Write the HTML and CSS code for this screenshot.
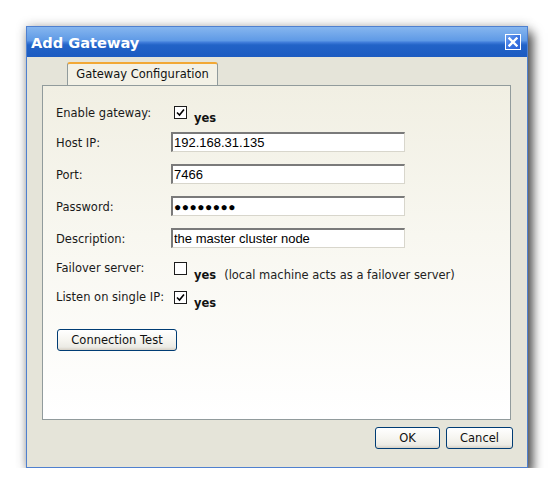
FILE: index.html
```html
<!DOCTYPE html>
<html>
<head>
<meta charset="utf-8">
<link rel="stylesheet" href="styles.css">
</head>
<body>
<div class="window">
  <div class="titlebar">
    <span class="title">Add Gateway</span>
    <span class="close"><svg width="10" height="10" viewBox="0 0 10 10"><path d="M1.5 1.5 L8.5 8.5 M8.5 1.5 L1.5 8.5" stroke="#fff" stroke-width="2.4" stroke-linecap="square"/></svg></span>
  </div>
  <div class="body">
    <div class="tabs"><div class="tab">Gateway Configuration</div></div>
    <div class="panel">
      <div class="row row-enable">
        <span class="label">Enable gateway:</span>
        <span class="cb checked"><svg width="9" height="9" viewBox="0 0 9 9"><path d="M1 4.5 L3.5 7 L8 1.5" fill="none" stroke="#000" stroke-width="1.6"/></svg></span>
        <span class="yes">yes</span>
      </div>
      <div class="row row-input">
        <span class="label">Host IP:</span>
        <input class="field" type="text" value="192.168.31.135">
      </div>
      <div class="row row-input">
        <span class="label">Port:</span>
        <input class="field" type="text" value="7466">
      </div>
      <div class="row row-input">
        <span class="label">Password:</span>
        <input class="field pw" type="text" value="●●●●●●●●">
      </div>
      <div class="row row-input">
        <span class="label">Description:</span>
        <input class="field" type="text" value="the master cluster node">
      </div>
      <div class="row row-failover">
        <span class="label">Failover server:</span>
        <span class="cb"></span>
        <span class="yes">yes</span>
        <span class="note">(local machine acts as a failover server)</span>
      </div>
      <div class="row row-listen">
        <span class="label">Listen on single IP:</span>
        <span class="cb checked"><svg width="9" height="9" viewBox="0 0 9 9"><path d="M1 4.5 L3.5 7 L8 1.5" fill="none" stroke="#000" stroke-width="1.6"/></svg></span>
        <span class="yes">yes</span>
      </div>
      <button class="btn btn-test">Connection Test</button>
    </div>
    <div class="footer">
      <button class="btn btn-ok">OK</button>
      <button class="btn btn-cancel">Cancel</button>
    </div>
  </div>
</div>
</body>
</html>
```
FILE: styles.css
```css
html, body {
  margin: 0;
  padding: 0;
  background: #ffffff;
}
body {
  padding: 26px 0 0 26px;
  font-family: "DejaVu Sans", Verdana, sans-serif;
  font-size: 11.5px;
  color: #222;
}
.window {
  width: 500px;
  height: 440px;
  border: 1px solid #4f80cf;
  background: #e5e4d9;
  box-shadow: 5px 7px 10px rgba(0, 0, 0, 0.65), 0 0 10px rgba(0, 0, 0, 0.25);
  display: flex;
  flex-direction: column;
}
.titlebar {
  height: 30px;
  background: linear-gradient(to bottom, #86b6ef 0%, #5f9ae6 45%, #3d7ad9 52%, #2263c7 60%, #1c5bc1 100%);
  display: flex;
  align-items: center;
  justify-content: space-between;
  padding: 0 6px 0 4px;
}
.title {
  font-family: "DejaVu Sans", Verdana, sans-serif;
  font-weight: bold;
  font-size: 14.6px;
  color: #fff;
  margin-top: 1px;
}
.close {
  width: 14px;
  height: 14px;
  border: 1px solid #fff;
  background: linear-gradient(135deg, #6fa2f0 0%, #3a74e2 50%, #2b62d6 100%);
  display: flex;
  align-items: center;
  justify-content: center;
}
.body {
  flex: 1;
  display: flex;
  flex-direction: column;
  padding: 5px 16px 0 15px;
}
.tabs {
  display: flex;
  padding-left: 25px;
  height: 23px;
  position: relative;
  z-index: 1;
}
.tab {
  width: 149px;
  height: 21px;
  border: 1px solid #919b9c;
  border-bottom: none;
  border-top: 2px solid #f2a835;
  border-radius: 3px 3px 0 0;
  background: #f3f1e6;
  text-align: center;
  line-height: 20px;
  color: #111;
}
.panel {
  height: 335px;
  border: 1px solid #919b9c;
  background: linear-gradient(to bottom, #f1efe3 0%, #f8f7f0 45%, #ffffff 100%);
  padding: 12px 0 0 13px;
  box-sizing: border-box;
}
.row {
  display: flex;
  align-items: flex-start;
}
.label {
  width: 115px;
  flex: none;
  line-height: 14px;
  color: #1a1a1a;
}
.row-enable { height: 28px; }
.row-enable .label { margin-top: 8px; }
.row-enable .cb { margin-top: 8px; }
.row-enable .yes { margin-top: 13px; }
.row-input { height: 32px; }
.row-input .label { margin-top: 10px; }
.row-input .field { margin-top: 6px; }
.row-failover { height: 29px; }
.row-failover .label { margin-top: 7px; }
.row-failover .cb { margin-top: 8px; }
.row-failover .yes { margin-top: 14px; }
.row-failover .note { margin-top: 14px; margin-left: 8px; line-height: 14px; }
.row-listen { height: 38px; }
.row-listen .label { margin-top: 7px; }
.row-listen .cb { margin-top: 8px; }
.row-listen .yes { margin-top: 13px; }
.cb {
  width: 11px;
  height: 11px;
  border: 1px solid #1c1c1c;
  background: #fff;
  margin-left: 3px;
  display: flex;
  align-items: center;
  justify-content: center;
  flex: none;
}
.yes {
  font-weight: bold;
  margin-left: 7px;
  line-height: 14px;
  color: #111;
}
.field {
  width: 234px;
  height: 20px;
  box-sizing: border-box;
  border-style: solid;
  border-width: 2px 1px 1px 2px;
  border-color: #7a7a7a #d8d6cc #d8d6cc #7a7a7a;
  background: #fff;
  font-family: "Liberation Sans", Arial, sans-serif;
  font-size: 13px;
  color: #000;
  padding: 0 0 0 1px;
  margin: 0;
  outline: none;
}
.pw {
  font-size: 12px;
  letter-spacing: 0.5px;
}
.btn {
  font-family: "DejaVu Sans", Verdana, sans-serif;
  font-size: 11.5px;
  color: #111;
  height: 22px;
  border: 1px solid #003c74;
  border-radius: 3px;
  background: linear-gradient(to bottom, #ffffff 0%, #f6f5f0 50%, #ecebe5 85%, #d6d0c5 100%);
  padding: 0;
  margin: 0;
}
.btn-test {
  width: 120px;
  margin: 8px 0 0 1px;
  display: block;
}
.footer {
  display: flex;
  justify-content: flex-end;
  gap: 6px;
  padding-top: 7px;
  margin-right: -2px;
}
.btn-ok { width: 65px; }
.btn-cancel { width: 67px; }
```
